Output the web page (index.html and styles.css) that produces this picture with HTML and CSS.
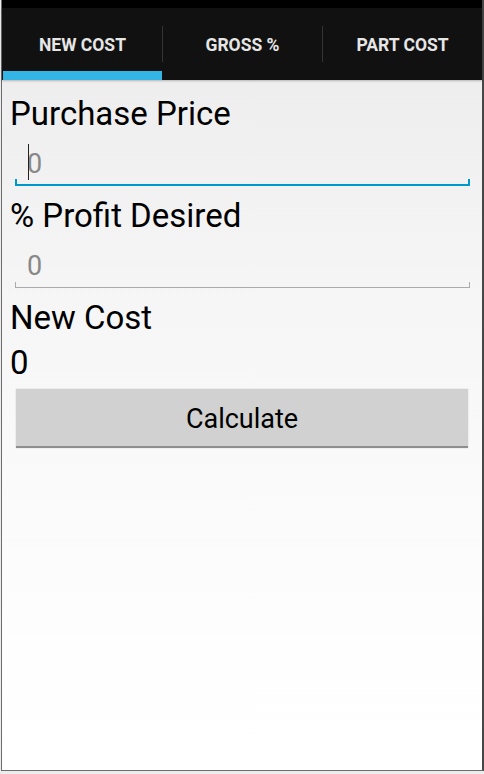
FILE: index.html
```html
<!DOCTYPE html>
<html>
<head>
<meta charset="utf-8">
<link rel="stylesheet" href="styles.css">
</head>
<body>
<div class="screen">
  <div class="statusbar"></div>
  <div class="tabbar">
    <div class="tab active"><span>NEW COST</span></div>
    <div class="sep"></div>
    <div class="tab"><span>GROSS %</span></div>
    <div class="sep"></div>
    <div class="tab"><span>PART COST</span></div>
  </div>
  <div class="content">
    <div class="label">Purchase Price</div>
    <div class="field focused">
      <span class="caret"></span>
      <div class="value">0</div>
      <div class="underline"></div>
    </div>
    <div class="label">% Profit Desired</div>
    <div class="field">
      <div class="value">0</div>
      <div class="underline"></div>
    </div>
    <div class="label">New Cost</div>
    <div class="label">0</div>
    <div class="button">Calculate</div>
  </div>
</div>
</body>
</html>
```
FILE: styles.css
```css
html, body {
  margin: 0;
  padding: 0;
}
body {
  width: 484px;
  height: 774px;
  background: #ececec;
  font-family: Roboto, "Liberation Sans", sans-serif;
  overflow: hidden;
}
.screen {
  box-sizing: border-box;
  margin-left: 1px;
  width: 483px;
  height: 771px;
  border-left: 1px solid #6c6c6c;
  border-right: 2px solid #474747;
  border-bottom: 1px solid #6c6c6c;
  background: linear-gradient(to bottom, #ebebeb 0%, #f6f6f6 40%, #fefefe 85%, #ffffff 100%);
  display: flex;
  flex-direction: column;
}
.statusbar {
  height: 8px;
  background: #000;
}
.tabbar {
  height: 72px;
  background: #111111;
  display: flex;
  align-items: center;
  box-shadow: 0 1px 2px rgba(0,0,0,0.25);
}
.tab {
  box-sizing: border-box;
  flex: 1;
  height: 72px;
  display: flex;
  align-items: center;
  justify-content: center;
  color: #e6e6e6;
  font-size: 17.5px;
  font-weight: bold;
  padding-top: 1px;
}
.tab.active {
  border-bottom: 9px solid #33b5e5;
  padding-top: 10px;
  margin-left: 1px;
}
.sep {
  width: 1px;
  height: 36px;
  background: #343434;
}
.content {
  padding: 11px 7px 0 8px;
}
.label {
  font-size: 33px;
  line-height: 45px;
  color: #000;
}
.field {
  position: relative;
  height: 57px;
  margin: 0 5px 0 5px;
  padding-top: 12px;
  box-sizing: border-box;
}
.value {
  font-size: 27px;
  line-height: 32px;
  color: #888888;
  padding-left: 12px;
}
.caret {
  position: absolute;
  left: 13px;
  top: 8px;
  width: 1px;
  height: 36px;
  background: #222;
}
.underline {
  box-sizing: border-box;
  border: 1px solid #ababab;
  border-top: none;
  margin-top: 0;
  height: 6px;
}
.field.focused .underline {
  border: 2px solid #0099cc;
  border-top: none;
  height: 7px;
  margin-top: -1px;
}
.button {
  margin: 4px 7px 0 6px;
  height: 59px;
  box-sizing: border-box;
  background: #d1d1d1;
  border-bottom: 2px solid #8e8e8e;
  box-shadow: 0 0 1px rgba(0,0,0,0.25);
  text-align: center;
  font-size: 27px;
  line-height: 58px;
  padding-top: 1px;
  color: #000;
}
```
